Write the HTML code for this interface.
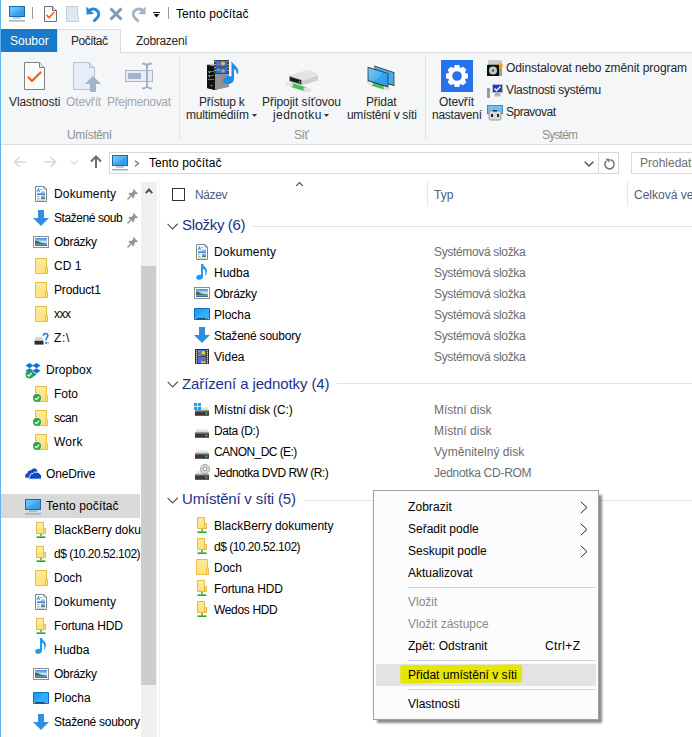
<!DOCTYPE html>
<html><head><meta charset="utf-8">
<style>
*{margin:0;padding:0;box-sizing:border-box}
html,body{width:692px;height:737px;overflow:hidden;background:#fff}
body{position:relative;font-family:"Liberation Sans",sans-serif;font-size:12px;color:#000}
.a{position:absolute;white-space:nowrap;line-height:14px}
.i{position:absolute;display:block;overflow:visible}
</style></head><body>
<svg width="0" height="0" style="position:absolute">
<defs>
<linearGradient id="gscr" x1="0" y1="0" x2="1" y2="1"><stop offset="0" stop-color="#7fcaf8"/><stop offset="0.5" stop-color="#4fb0f2"/><stop offset="0.5" stop-color="#3ea6ef"/><stop offset="1" stop-color="#2a98e8"/></linearGradient>
<linearGradient id="gfold" x1="0" y1="0" x2="0" y2="1"><stop offset="0" stop-color="#ffeaa0"/><stop offset="1" stop-color="#fde07a"/></linearGradient>
<symbol id="pc" viewBox="0 0 16 16"><rect x="0.5" y="0.5" width="15" height="10" fill="url(#gscr)" stroke="#1e6aa8"/><rect x="4" y="11.5" width="8" height="1" fill="#7f9cb8"/><rect x="0" y="14" width="16" height="1.6" fill="#9fb4c9"/></symbol>
<symbol id="fold" viewBox="0 0 13 16"><path d="M0.5 0.5H11.5V9.5H12.5V15.5H0.5Z" fill="url(#gfold)" stroke="#e6c23e"/><path d="M10.5 15.5V10Q10.5 9.5 11.5 9.5H12" stroke="#e6c23e" fill="none"/></symbol>
<symbol id="nfold" viewBox="0 0 10 16"><path d="M0.5 0.5H7.5V6.5H9.5V11.5H0.5Z" fill="url(#gfold)" stroke="#e3bb4a"/><path d="M7.5 6.5V11.5" stroke="#e3bb4a"/><rect x="4.3" y="12" width="1.4" height="2.4" fill="#2aa52a"/><rect x="0.5" y="14.4" width="9" height="1.6" fill="#2aa52a"/></symbol>
<symbol id="docs" viewBox="0 0 12 16"><path d="M0.5 0.5H9L11.5 3V15.5H0.5Z" fill="#fff" stroke="#858585"/><path d="M9 0.5V3H11.5" fill="none" stroke="#858585"/><path d="M1.8 6L3.6 2.3L4.4 6M2.6 4.6H4.2" stroke="#2b8ee0" stroke-width="0.9" fill="none"/><rect x="5.5" y="3" width="1.2" height="1.2" fill="#2b8ee0"/><rect x="6" y="5.6" width="4" height="1" fill="#46a0e8"/><rect x="2" y="7.4" width="8" height="1.4" fill="#0a78d8"/><rect x="2" y="9.8" width="2.5" height="0.9" fill="#999"/><rect x="6" y="9.6" width="4" height="1.2" fill="#5a9ef0"/><rect x="2" y="11.8" width="2.5" height="0.9" fill="#999"/><rect x="6" y="11.4" width="4" height="1.4" fill="#2a5a3a"/><rect x="2" y="13.6" width="8" height="0.9" fill="#aaa"/></symbol>
<symbol id="dl" viewBox="0 0 16 16"><path d="M5 0H11V8H16L8 16L0 8H5Z" fill="#2e8ee0"/></symbol>
<symbol id="pics" viewBox="0 0 16 12"><linearGradient id="gsky" x1="0" y1="0" x2="0" y2="1"><stop offset="0" stop-color="#3f86e0"/><stop offset="0.5" stop-color="#cfe6f5"/><stop offset="1" stop-color="#9cc0e0"/></linearGradient><rect x="0.5" y="0.5" width="15" height="11" fill="#fff" stroke="#8c8c8c"/><rect x="2" y="2" width="12" height="8" fill="url(#gsky)"/><path d="M2 4.5C4 4.5 6 6 8 6.8C10 7.3 12 7.2 14 7.5V8.5H2Z" fill="#3d6e48"/><path d="M2 8C6 7.6 10 8 14 8.4V10H2Z" fill="#6f98c0"/><rect x="2" y="9" width="12" height="1" fill="#3a6aa8"/></symbol>
<symbol id="music" viewBox="0 0 12 16"><path d="M5 0H7C7.3 1.5 8.5 2.5 9.5 3.5C10.8 4.8 11.2 6.5 10.8 8.5C10.5 9.8 10 10.8 9.4 11.5L8.8 11.2C9.3 10 9.5 8.5 9.2 7.2C8.9 6 8 5.2 7 4.8V12.5C7 14.5 5.5 15.8 3.5 15.8C1.5 15.8 0.2 15 0.2 13.5C0.2 11.8 2 10.8 3.8 10.8C4.3 10.8 4.7 10.9 5 11Z" fill="#1a9cf2"/></symbol>
<symbol id="desk" viewBox="0 0 16 12"><rect x="0" y="0" width="16" height="12" rx="0.8" fill="#0b6ac4"/><rect x="1" y="1" width="14" height="9" fill="#1ba1f7"/><path d="M1 10L11 1H15V10Z" fill="#31aef9"/><rect x="1" y="10" width="14" height="1.2" fill="#0a4e8e"/><rect x="1.2" y="10.1" width="1" height="1" fill="#fff"/><rect x="11.8" y="10.1" width="1" height="1" fill="#fff"/><rect x="13.8" y="10.1" width="1" height="1" fill="#fff"/></symbol>
<symbol id="vid" viewBox="0 0 14 15"><rect x="0" y="0" width="14" height="15" fill="#2a2a2a"/><rect x="3" y="0.8" width="8" height="6.4" fill="#3a78e0"/><rect x="3" y="7.9" width="8" height="6.4" fill="#3a78e0"/><circle cx="8.3" cy="4" r="1.9" fill="#e8d020"/><rect x="6" y="5.6" width="5" height="1.6" fill="#2a9a40"/><rect x="3" y="5.4" width="3" height="1.8" fill="#f07040"/><rect x="3.4" y="2.4" width="1.4" height="0.8" fill="#e0e080"/><circle cx="7.5" cy="9" r="1.3" fill="#c04080"/><rect x="6" y="12.2" width="4.5" height="2" fill="#e8c020"/><g fill="#f4f4f4"><rect x="1" y="1.2" width="1.2" height="1.2"/><rect x="11.8" y="1.2" width="1.2" height="1.2"/><rect x="1" y="3.2" width="1.2" height="1.2"/><rect x="11.8" y="3.2" width="1.2" height="1.2"/><rect x="1" y="5.2" width="1.2" height="1.2"/><rect x="11.8" y="5.2" width="1.2" height="1.2"/><rect x="1" y="7.2" width="1.2" height="1.2"/><rect x="11.8" y="7.2" width="1.2" height="1.2"/><rect x="1" y="9.2" width="1.2" height="1.2"/><rect x="11.8" y="9.2" width="1.2" height="1.2"/><rect x="1" y="11.2" width="1.2" height="1.2"/><rect x="11.8" y="11.2" width="1.2" height="1.2"/><rect x="1" y="13.2" width="1.2" height="1.2"/><rect x="11.8" y="13.2" width="1.2" height="1.2"/></g></symbol>
<symbol id="drv" viewBox="0 0 14 9"><path d="M1.8 0.3H12.2L14 3.8H0Z" fill="#d9dbdd"/><path d="M1.8 0.3H12.2L12.8 1.5H1.2Z" fill="#eceeef"/><rect x="0" y="3.6" width="14" height="5.2" fill="#3a3a3a"/><rect x="0" y="3.6" width="14" height="0.9" fill="#8f8f8f"/><rect x="10.5" y="5.6" width="1.8" height="1.6" fill="#3fdd3f"/></symbol>
<symbol id="pin" viewBox="0 0 11 11"><path d="M6.5 0L11 4.5L9.8 5.2L8.8 4.8L7 6.8L7.3 8.6L6.3 9.6L4.4 7.6L1 11L0 10L3.4 6.6L1.4 4.7L2.4 3.7L4.2 4L6.2 2.2L5.8 1.2Z" fill="#8d99a4"/></symbol>
<symbol id="chk" viewBox="0 0 8 8"><circle cx="4" cy="4" r="4" fill="#2aa84a"/><path d="M2 4.2L3.5 5.6L6.2 2.6" stroke="#fff" stroke-width="1.2" fill="none"/></symbol>
</defs></svg>
<div class="a" style="left:0;top:0;width:1px;height:737px;background:#5eb3ee"></div>
<div class="a" style="left:1px;top:29px;width:56px;height:24px;background:#1979ca"></div>
<div class="a" style="left:1px;top:52px;width:691px;height:93px;background:#f5f6f7;border-bottom:1px solid #dadbdc"></div>
<div class="a" style="left:121px;top:52px;width:571px;height:1px;background:#dadbdc"></div>
<div class="a" style="left:57px;top:29px;width:64px;height:24px;background:#f5f6f7;border:1px solid #dadbdc;border-bottom:none"></div>
<div class="a" style="left:179px;top:55px;width:1px;height:85px;background:#e2e3e4"></div>
<div class="a" style="left:425px;top:55px;width:1px;height:85px;background:#e2e3e4"></div>
<div class="a" style="left:109px;top:152px;width:510px;height:22px;border:1px solid #d9d9d9;background:#fff"></div>
<div class="a" style="left:598px;top:153px;width:1px;height:20px;background:#d9d9d9"></div>
<div class="a" style="left:631px;top:152px;width:70px;height:22px;border:1px solid #d9d9d9;background:#fff"></div>
<div class="a" style="left:141px;top:182px;width:16px;height:555px;background:#f0f0f0"></div>
<div class="a" style="left:141px;top:266px;width:15px;height:419px;background:#cdcdcd"></div>
<div class="a" style="left:159px;top:180px;width:1px;height:557px;background:#f2f2f2"></div>
<div class="a" style="left:1px;top:494px;width:139px;height:24px;background:#d9d9d9"></div>
<div class="a" style="left:172px;top:188px;width:13px;height:13px;border:1px solid #333"></div>
<div class="a" style="left:427px;top:181px;width:1px;height:25px;background:#e5e5e5"></div>
<div class="a" style="left:627px;top:181px;width:1px;height:25px;background:#e5e5e5"></div>
<div class="a" style="left:253px;top:226px;width:439px;height:1px;background:#e2e2e2"></div>
<div class="a" style="left:337px;top:383px;width:355px;height:1px;background:#e2e2e2"></div>
<div class="a" style="left:303px;top:500px;width:389px;height:1px;background:#e2e2e2"></div>
<div class="a" style="left:176px;top:7px;color:#000;letter-spacing:0.084px">Tento počítač</div>
<div class="a" style="left:10px;top:34px;color:#fff">Soubor</div>
<div class="a" style="left:71px;top:34px;color:#262626;letter-spacing:-0.505px">Počítač</div>
<div class="a" style="left:136px;top:34px;color:#262626;letter-spacing:-0.304px">Zobrazení</div>
<div class="a" style="left:9px;top:95px;color:#262626;letter-spacing:-0.081px">Vlastnosti</div>
<div class="a" style="left:66px;top:95px;color:#a0a6ae;letter-spacing:-0.136px">Otevřít</div>
<div class="a" style="left:107px;top:95px;color:#a0a6ae;letter-spacing:-0.338px">Přejmenovat</div>
<div class="a" style="left:67px;top:128px;color:#8f8f8f;letter-spacing:-0.402px">Umístění</div>
<div class="a" style="left:199px;top:95px;color:#262626;letter-spacing:-0.195px">Přístup k</div>
<div class="a" style="left:186px;top:108px;color:#262626;letter-spacing:-0.169px">multimédiím</div>
<div class="a" style="left:262px;top:95px;color:#262626;letter-spacing:-0.058px">Připojit síťovou</div>
<div class="a" style="left:273px;top:108px;color:#262626;letter-spacing:0.432px">jednotku</div>
<div class="a" style="left:294px;top:128px;color:#8f8f8f;letter-spacing:-0.422px">Síť</div>
<div class="a" style="left:366px;top:95px;color:#262626;letter-spacing:-0.172px">Přidat</div>
<div class="a" style="left:347px;top:108px;color:#262626;letter-spacing:-0.302px">umístění v síti</div>
<div class="a" style="left:439px;top:95px;color:#262626;letter-spacing:-0.136px">Otevřít</div>
<div class="a" style="left:432px;top:108px;color:#262626;letter-spacing:-0.256px">nastavení</div>
<div class="a" style="left:506px;top:61px;color:#262626;letter-spacing:-0.079px">Odinstalovat nebo změnit program</div>
<div class="a" style="left:506px;top:83px;color:#262626;letter-spacing:-0.279px">Vlastnosti systému</div>
<div class="a" style="left:506px;top:105px;color:#262626;letter-spacing:-0.504px">Spravovat</div>
<div class="a" style="left:542px;top:128px;color:#8f8f8f;letter-spacing:-0.803px">Systém</div>
<div class="a" style="left:149px;top:156px;color:#000;letter-spacing:0.084px">Tento počítač</div>
<div class="a" style="left:640px;top:156px;color:#6d6d6d">Prohledat</div>
<div class="a" style="left:54px;top:187px;color:#000;letter-spacing:0.162px">Dokumenty</div>
<div class="a" style="left:54px;top:211px;color:#000;width:70px;overflow:hidden;letter-spacing:-0.426px">Stažené soub</div>
<div class="a" style="left:54px;top:235px;color:#000;letter-spacing:-0.281px">Obrázky</div>
<div class="a" style="left:54px;top:259px;color:#000">CD 1</div>
<div class="a" style="left:54px;top:283px;color:#000;letter-spacing:-0.162px">Product1</div>
<div class="a" style="left:54px;top:307px;color:#000;letter-spacing:-0.500px">xxx</div>
<div class="a" style="left:54px;top:331px;color:#000;letter-spacing:0.650px">Z:\</div>
<div class="a" style="left:46px;top:363px;color:#000;letter-spacing:0.057px">Dropbox</div>
<div class="a" style="left:54px;top:387px;color:#000;letter-spacing:-0.005px">Foto</div>
<div class="a" style="left:54px;top:411px;color:#000;letter-spacing:-0.453px">scan</div>
<div class="a" style="left:54px;top:435px;color:#000;letter-spacing:0.240px">Work</div>
<div class="a" style="left:46px;top:467px;color:#000;letter-spacing:-0.170px">OneDrive</div>
<div class="a" style="left:46px;top:499px;color:#000;letter-spacing:0.101px">Tento počítač</div>
<div class="a" style="left:54px;top:523px;color:#000;width:87px;overflow:hidden;letter-spacing:-0.034px">BlackBerry dokumenty</div>
<div class="a" style="left:54px;top:547px;color:#000;width:87px;overflow:hidden;letter-spacing:-0.509px">d$ (10.20.52.102)</div>
<div class="a" style="left:54px;top:571px;color:#000;letter-spacing:-0.039px">Doch</div>
<div class="a" style="left:54px;top:595px;color:#000;letter-spacing:0.162px">Dokumenty</div>
<div class="a" style="left:54px;top:619px;color:#000;letter-spacing:-0.189px">Fortuna HDD</div>
<div class="a" style="left:54px;top:643px;color:#000">Hudba</div>
<div class="a" style="left:54px;top:667px;color:#000;letter-spacing:-0.281px">Obrázky</div>
<div class="a" style="left:54px;top:691px;color:#000">Plocha</div>
<div class="a" style="left:54px;top:715px;color:#000;width:87px;overflow:hidden;letter-spacing:-0.290px">Stažené soubory</div>
<div class="a" style="left:195px;top:188px;color:#4c607a;letter-spacing:-0.404px">Název</div>
<div class="a" style="left:434px;top:188px;color:#4c607a">Typ</div>
<div class="a" style="left:634px;top:188px;color:#4c607a">Celková velikost</div>
<div class="a" style="left:182px;top:216px;font-size:15px;line-height:17px;color:#1e3287;letter-spacing:-0.354px">Složky (6)</div>
<div class="a" style="left:182px;top:375px;font-size:15px;line-height:17px;color:#1e3287;letter-spacing:-0.117px">Zařízení a jednotky (4)</div>
<div class="a" style="left:182px;top:490px;font-size:15px;line-height:17px;color:#1e3287;letter-spacing:-0.202px">Umístění v síti (5)</div>
<div class="a" style="left:214px;top:245px;color:#000;letter-spacing:0.162px">Dokumenty</div>
<div class="a" style="left:434px;top:245px;color:#6d6d6d;letter-spacing:-0.334px">Systémová složka</div>
<div class="a" style="left:214px;top:266px;color:#000">Hudba</div>
<div class="a" style="left:434px;top:266px;color:#6d6d6d;letter-spacing:-0.334px">Systémová složka</div>
<div class="a" style="left:214px;top:287px;color:#000;letter-spacing:-0.281px">Obrázky</div>
<div class="a" style="left:434px;top:287px;color:#6d6d6d;letter-spacing:-0.334px">Systémová složka</div>
<div class="a" style="left:214px;top:308px;color:#000">Plocha</div>
<div class="a" style="left:434px;top:308px;color:#6d6d6d;letter-spacing:-0.334px">Systémová složka</div>
<div class="a" style="left:214px;top:329px;color:#000;letter-spacing:-0.219px">Stažené soubory</div>
<div class="a" style="left:434px;top:329px;color:#6d6d6d;letter-spacing:-0.334px">Systémová složka</div>
<div class="a" style="left:214px;top:350px;color:#000">Videa</div>
<div class="a" style="left:434px;top:350px;color:#6d6d6d;letter-spacing:-0.334px">Systémová složka</div>
<div class="a" style="left:214px;top:403px;color:#000;letter-spacing:-0.131px">Místní disk (C:)</div>
<div class="a" style="left:434px;top:403px;color:#6d6d6d;letter-spacing:0.004px">Místní disk</div>
<div class="a" style="left:214px;top:424px;color:#000;letter-spacing:-0.398px">Data (D:)</div>
<div class="a" style="left:434px;top:424px;color:#6d6d6d;letter-spacing:0.004px">Místní disk</div>
<div class="a" style="left:214px;top:445px;color:#000;letter-spacing:-0.560px">CANON_DC (E:)</div>
<div class="a" style="left:434px;top:445px;color:#6d6d6d;letter-spacing:0.047px">Vyměnitelný disk</div>
<div class="a" style="left:214px;top:466px;color:#000;letter-spacing:-0.480px">Jednotka DVD RW (R:)</div>
<div class="a" style="left:434px;top:466px;color:#6d6d6d;letter-spacing:-0.270px">Jednotka CD-ROM</div>
<div class="a" style="left:214px;top:519px;color:#000;letter-spacing:-0.034px">BlackBerry dokumenty</div>
<div class="a" style="left:214px;top:540px;color:#000;letter-spacing:-0.509px">d$ (10.20.52.102)</div>
<div class="a" style="left:214px;top:561px;color:#000;letter-spacing:-0.039px">Doch</div>
<div class="a" style="left:214px;top:582px;color:#000;letter-spacing:-0.189px">Fortuna HDD</div>
<div class="a" style="left:214px;top:603px;color:#000;letter-spacing:-0.346px">Wedos HDD</div>
<!-- ICONS -->
<svg class="i" style="left:35px;top:186px" width="12" height="16"><use href="#docs"/></svg>
<svg class="i" style="left:33px;top:210px" width="16" height="16"><use href="#dl"/></svg>
<svg class="i" style="left:33px;top:236px" width="16" height="12"><use href="#pics"/></svg>
<svg class="i" style="left:35px;top:258px" width="13" height="16"><use href="#fold"/></svg>
<svg class="i" style="left:35px;top:282px" width="13" height="16"><use href="#fold"/></svg>
<svg class="i" style="left:35px;top:306px" width="13" height="16"><use href="#fold"/></svg>
<svg class="i" style="left:35px;top:386px" width="13" height="16"><use href="#fold"/></svg>
<svg class="i" style="left:33px;top:394px" width="8" height="8"><use href="#chk"/></svg>
<svg class="i" style="left:35px;top:410px" width="13" height="16"><use href="#fold"/></svg>
<svg class="i" style="left:33px;top:418px" width="8" height="8"><use href="#chk"/></svg>
<svg class="i" style="left:35px;top:434px" width="13" height="16"><use href="#fold"/></svg>
<svg class="i" style="left:33px;top:442px" width="8" height="8"><use href="#chk"/></svg>
<svg class="i" style="left:25px;top:499px" width="16" height="16"><use href="#pc"/></svg>
<svg class="i" style="left:36px;top:522px" width="10" height="16"><use href="#nfold"/></svg>
<svg class="i" style="left:36px;top:546px" width="10" height="16"><use href="#nfold"/></svg>
<svg class="i" style="left:35px;top:570px" width="13" height="16"><use href="#fold"/></svg>
<svg class="i" style="left:35px;top:594px" width="12" height="16"><use href="#docs"/></svg>
<svg class="i" style="left:36px;top:618px" width="10" height="16"><use href="#nfold"/></svg>
<svg class="i" style="left:35px;top:638px" width="12" height="16"><use href="#music"/></svg>
<svg class="i" style="left:33px;top:668px" width="16" height="12"><use href="#pics"/></svg>
<svg class="i" style="left:33px;top:692px" width="16" height="12"><use href="#desk"/></svg>
<svg class="i" style="left:33px;top:714px" width="16" height="16"><use href="#dl"/></svg>
<svg class="i" style="left:127px;top:189px" width="11" height="11"><use href="#pin"/></svg>
<svg class="i" style="left:127px;top:213px" width="11" height="11"><use href="#pin"/></svg>
<svg class="i" style="left:127px;top:237px" width="11" height="11"><use href="#pin"/></svg>
<svg class="i" style="left:196px;top:244px" width="12" height="16"><use href="#docs"/></svg>
<svg class="i" style="left:196px;top:264px" width="12" height="16"><use href="#music"/></svg>
<svg class="i" style="left:194px;top:287px" width="16" height="12"><use href="#pics"/></svg>
<svg class="i" style="left:194px;top:308px" width="16" height="12"><use href="#desk"/></svg>
<svg class="i" style="left:194px;top:327px" width="16" height="16"><use href="#dl"/></svg>
<svg class="i" style="left:195px;top:349px" width="14" height="15"><use href="#vid"/></svg>
<svg class="i" style="left:195px;top:407px" width="14" height="9"><use href="#drv"/></svg>
<svg class="i" style="left:195px;top:429px" width="14" height="9"><use href="#drv"/></svg>
<svg class="i" style="left:195px;top:450px" width="14" height="9"><use href="#drv"/></svg>
<svg class="i" style="left:195px;top:471px" width="14" height="9"><use href="#drv"/></svg>
<svg class="i" style="left:197px;top:517px" width="10" height="16"><use href="#nfold"/></svg>
<svg class="i" style="left:197px;top:538px" width="10" height="16"><use href="#nfold"/></svg>
<svg class="i" style="left:197px;top:580px" width="10" height="16"><use href="#nfold"/></svg>
<svg class="i" style="left:197px;top:601px" width="10" height="16"><use href="#nfold"/></svg>
<svg class="i" style="left:196px;top:559px" width="13" height="16"><use href="#fold"/></svg>
<!-- EXTRA ICONS -->
<!-- title bar -->
<svg class="i" style="left:9px;top:6px" width="16" height="16"><use href="#pc"/></svg>
<div class="a" style="left:32px;top:7px;width:1px;height:12px;background:#9a9a9a"></div>
<svg class="i" style="left:44px;top:6px" width="13" height="16" viewBox="0 0 13 16"><path d="M0.5 0.5H8.5L12.5 4.5V15.5H0.5Z" fill="#fafafa" stroke="#707070"/><path d="M8.5 0.5V4.5H12.5" fill="#e0e0e0" stroke="#707070"/><path d="M2.5 9L5 11.5L10.5 6" stroke="#f05a22" stroke-width="1.6" fill="none"/></svg>
<svg class="i" style="left:66px;top:6px" width="13" height="16" viewBox="0 0 13 16"><path d="M0.5 0.5H11.5V9.5H12.5V15.5H0.5Z" fill="#dfe7f2" stroke="#c3d0e0"/></svg>
<svg class="i" style="left:86px;top:6px" width="15" height="16" viewBox="0 0 15 16"><path d="M2.5 5.2C5 2.5 9 2.5 11.2 4.6C13.4 6.8 13 10 11 12L7.5 15.5" stroke="#2b88d8" stroke-width="3" fill="none"/><path d="M0.3 0.5L0.5 8.5L8 8Z" fill="#2b88d8"/></svg>
<svg class="i" style="left:109px;top:7px" width="14" height="14" viewBox="0 0 14 14"><path d="M1.5 1.5L12.5 12.5M12.5 1.5L1.5 12.5" stroke="#8497b2" stroke-width="3"/></svg>
<svg class="i" style="left:131px;top:6px" width="15" height="16" viewBox="0 0 15 16"><path d="M12.5 5.2C10 2.5 6 2.5 3.8 4.6C1.6 6.8 2 10 4 12L7.5 15.5" stroke="#a3b5cd" stroke-width="3" fill="none"/><path d="M14.7 0.5L14.5 8.5L7 8Z" fill="#a3b5cd"/></svg>
<div class="a" style="left:153px;top:12px;width:7px;height:1px;background:#111"></div>
<svg class="i" style="left:153px;top:14px" width="7" height="4" viewBox="0 0 7 4"><path d="M0.5 0H6.5L3.5 3.5Z" fill="#111"/></svg>
<div class="a" style="left:168px;top:7px;width:1px;height:12px;background:#9a9a9a"></div>

<!-- ribbon: vlastnosti -->
<svg class="i" style="left:24px;top:62px" width="21" height="28" viewBox="0 0 21 28"><path d="M0.5 0.5H15.5L20.5 5.5V27.5H0.5Z" fill="#fbfbfb" stroke="#808080"/><path d="M15.5 0.5V5.5H20.5" fill="#e6e6e6" stroke="#808080"/><path d="M3.8 14.8L8 19L17.2 9.8" stroke="#f7630c" stroke-width="2.2" fill="none"/></svg>
<!-- otevrit -->
<svg class="i" style="left:73px;top:62px" width="29" height="30" viewBox="0 0 29 30"><path d="M0.5 0.5H16.5L21.5 5.5V27.5H0.5Z" fill="#e6edf8" stroke="#b4c2d8"/><path d="M16.5 0.5V5.5H21.5" fill="#d5def0" stroke="#b4c2d8"/><path d="M20 14L28 22H23V30H17V22H12Z" fill="#a3b2c8"/></svg>
<!-- prejmenovat -->
<svg class="i" style="left:124px;top:62px" width="30" height="28" viewBox="0 0 30 28"><rect x="1.5" y="8.5" width="27" height="11" fill="#e6edf8" stroke="#a8b6cc"/><rect x="4" y="11" width="13" height="6" fill="#a3b2c8"/><path d="M18 1.5C20 1.5 22 2 23 3.5C24 2 26 1.5 28 1.5M23 3.5V24.5M18 26.5C20 26.5 22 26 23 24.5C24 26 26 26.5 28 26.5" stroke="#a3b2c8" stroke-width="2" fill="none"/></svg>

<!-- media icon -->
<svg class="i" style="left:206px;top:59px" width="34" height="32" viewBox="0 0 34 32">
<path d="M1 6L5 5H15V29L9 31L1 29Z" fill="#0a0a0a"/><path d="M9 7H23V28L9 31Z" fill="#8f9296"/><path d="M1 6L9 7.5V31L1 29Z" fill="#111"/>
<path d="M1 6L6 4.5H15L9 7Z" fill="#c8cacc"/>
<rect x="2" y="12" width="6" height="1" fill="#1e7ef0"/><rect x="2" y="16" width="6" height="1" fill="#1e7ef0"/><rect x="2" y="20" width="6" height="1" fill="#1e7ef0"/>
<circle cx="3.5" cy="13.5" r="0.8" fill="#40d0ff"/><circle cx="3.5" cy="17.5" r="0.8" fill="#40d0ff"/><circle cx="5.5" cy="26.5" r="0.8" fill="#40d0ff"/>
<rect x="8" y="1" width="15" height="14" fill="#444"/><rect x="10" y="2" width="11" height="5.5" fill="#2f6fe0"/><rect x="10" y="8.5" width="11" height="5.5" fill="#2f6fe0"/>
<circle cx="17" cy="4.5" r="2" fill="#f0c030"/><circle cx="17" cy="12" r="1.8" fill="#e0a020"/><rect x="11" y="4" width="3" height="2" fill="#e05060"/><rect x="11" y="10" width="3" height="2" fill="#50c060"/>
<g fill="#eee"><rect x="8.5" y="2" width="1" height="1"/><rect x="8.5" y="5" width="1" height="1"/><rect x="8.5" y="8" width="1" height="1"/><rect x="8.5" y="11" width="1" height="1"/><rect x="21.5" y="2" width="1" height="1"/><rect x="21.5" y="5" width="1" height="1"/><rect x="21.5" y="8" width="1" height="1"/><rect x="21.5" y="11" width="1" height="1"/></g>
<path d="M25.5 2C26.5 4 28 5.5 30 7.5C32.5 10 33 13 31.5 15L30.5 14.5C31 12.5 30 11 28 10V20C28 23 25 25 22 25C19.5 25 17 24 17 21.5C17 19 20 17 23 17C24 17 25 17.2 25.5 17.5Z" fill="#1b8fe6"/>
</svg>

<!-- network drive icon -->
<svg class="i" style="left:285px;top:70px" width="34" height="22" viewBox="0 0 34 22">
<path d="M6.5 15L21 19.5" stroke="#44c058" stroke-width="4.4" fill="none"/>
<path d="M1.8 13.5L6.5 15" stroke="#e6e6e6" stroke-width="3.4" stroke-linecap="round" fill="none"/>
<path d="M20 19.2L24.5 20.5" stroke="#e2e2e2" stroke-width="3.4" stroke-linecap="round" fill="none"/>
<path d="M4 5.5L20 0.5H26L33 4L17 9.5Z" fill="#e2e3e4"/>
<path d="M4 5.5L17 9.5V15.5L4 11.5Z" fill="#b9babb"/>
<path d="M4.8 6.8L16.2 10.3V14.3L4.8 10.8Z" fill="#1c1c1c"/>
<path d="M17 9.5L33 4V10.5L17 15.5Z" fill="#cfd0d1"/>
<path d="M17 9.5L33 4V5L17 10.5Z" fill="#f4f4f4"/>
<rect x="13.6" y="11.3" width="1.6" height="1.6" fill="#3ee03e"/>
</svg>

<!-- network location icon -->
<svg class="i" style="left:366px;top:65px" width="30" height="27" viewBox="0 0 30 27">
<path d="M5.5 18.6L19 22.8" stroke="#46c056" stroke-width="4.2" fill="none"/>
<path d="M2 17.6L5.5 18.6" stroke="#e4e4e4" stroke-width="3.4" stroke-linecap="round" fill="none"/>
<path d="M19 22.8L22.5 23.8" stroke="#dedede" stroke-width="3.4" stroke-linecap="round" fill="none"/>
<path d="M8 0.6L28.4 7.2V21.2L12 16Z" fill="#2d2d2d"/><path d="M8.8 1.6L27.6 7.8V20.1L12 15.2Z" fill="#3cb0f6"/>
<path d="M1.6 1.8L22.4 8.2V22.4L1.6 16Z" fill="#2f2f2f"/><path d="M2.4 2.9L21.6 8.8V21.3L2.4 15.3Z" fill="url(#gscr)"/>
</svg>

<!-- settings icon -->
<svg class="i" style="left:441px;top:60px" width="32" height="32" viewBox="0 0 32 32">
<rect width="32" height="32" fill="#2672ec"/>
<path d="M12.80 8.02 L13.80 5.02 L18.20 5.02 L19.20 8.02 A8.6 8.6 0 0 1 19.38 8.09 L22.21 6.68 L25.32 9.79 L23.91 12.62 A8.6 8.6 0 0 1 23.98 12.80 L26.98 13.80 L26.98 18.20 L23.98 19.20 A8.6 8.6 0 0 1 23.91 19.38 L25.32 22.21 L22.21 25.32 L19.38 23.91 A8.6 8.6 0 0 1 19.20 23.98 L18.20 26.98 L13.80 26.98 L12.80 23.98 A8.6 8.6 0 0 1 12.62 23.91 L9.79 25.32 L6.68 22.21 L8.09 19.38 A8.6 8.6 0 0 1 8.02 19.20 L5.02 18.20 L5.02 13.80 L8.02 12.80 A8.6 8.6 0 0 1 8.09 12.62 L6.68 9.79 L9.79 6.68 L12.62 8.09 A8.6 8.6 0 0 1 12.80 8.02Z" fill="#fff"/>
<circle cx="16" cy="16" r="4.8" fill="#2672ec"/>
</svg>

<!-- small system icons -->
<svg class="i" style="left:487px;top:60px" width="16" height="16" viewBox="0 0 16 16">
<rect x="1" y="0" width="14" height="5" fill="#c9cbcd"/><rect x="1" y="4" width="14" height="12" fill="#7fa98a"/><circle cx="13" cy="6" r="2.8" fill="#f0a030"/>
<rect x="0" y="5" width="12" height="11" fill="#0e0e0e"/><circle cx="6" cy="10.5" r="4" fill="#c8c8c8"/><circle cx="6" cy="10.5" r="1.2" fill="#555"/>
</svg>
<svg class="i" style="left:487px;top:84px" width="16" height="14" viewBox="0 0 16 14">
<rect x="5" y="0" width="11" height="9" fill="#b8bcc0"/><rect x="6" y="1" width="9" height="7" fill="#1a3ed0"/><path d="M7.5 4.5L9.5 6.5L13.5 2.5" stroke="#fff" stroke-width="1.4" fill="none"/><rect x="8" y="9" width="5" height="2" fill="#aaa"/><rect x="7" y="11" width="7" height="1.5" fill="#bbb"/>
<rect x="0" y="4" width="3" height="10" fill="#9a9ea2"/><rect x="0.8" y="5" width="1.4" height="1.4" fill="#30c030"/>
</svg>
<svg class="i" style="left:487px;top:105px" width="16" height="15" viewBox="0 0 16 15">
<rect x="0" y="0" width="16" height="9" fill="#2d8fe0"/><rect x="1" y="1" width="14" height="7" fill="#6cc0f5"/>
<rect x="2" y="6" width="12" height="9" rx="1.5" fill="#d8d8d8" stroke="#8a8a8a" stroke-width="0.8"/><rect x="4" y="9" width="2" height="3" fill="#222"/><rect x="10" y="9" width="2" height="3" fill="#222"/><rect x="6" y="5" width="4" height="1.5" fill="#333"/>
</svg>

<!-- ribbon dropdown arrows -->
<svg class="i" style="left:252px;top:114px" width="5" height="3" viewBox="0 0 5 3"><path d="M0 0H5L2.5 3Z" fill="#333"/></svg>
<svg class="i" style="left:324px;top:114px" width="5" height="3" viewBox="0 0 5 3"><path d="M0 0H5L2.5 3Z" fill="#333"/></svg>

<!-- address bar icons -->
<svg class="i" style="left:13px;top:156px" width="14" height="12" viewBox="0 0 14 12"><path d="M13 6H1.5M6.5 1L1.5 6L6.5 11" stroke="#d9d9d9" stroke-width="1.6" fill="none"/></svg>
<svg class="i" style="left:43px;top:156px" width="14" height="12" viewBox="0 0 14 12"><path d="M1 6H12.5M7.5 1L12.5 6L7.5 11" stroke="#d9d9d9" stroke-width="1.6" fill="none"/></svg>
<svg class="i" style="left:70px;top:160px" width="8" height="5" viewBox="0 0 8 5"><path d="M0.5 0.8L4 4L7.5 0.8" stroke="#d9d9d9" stroke-width="1.2" fill="none"/></svg>
<svg class="i" style="left:90px;top:155px" width="12" height="13" viewBox="0 0 12 13"><path d="M6 13V1.5M1 6.5L6 1.5L11 6.5" stroke="#6d6d6d" stroke-width="2" fill="none"/></svg>
<svg class="i" style="left:112px;top:155px" width="16" height="16"><use href="#pc"/></svg>
<svg class="i" style="left:134px;top:160px" width="6" height="7" viewBox="0 0 6 7"><path d="M1 0.8L4.5 3.5L1 6.2" stroke="#7a7a7a" stroke-width="1.3" fill="none"/></svg>
<svg class="i" style="left:584px;top:161px" width="10" height="6" viewBox="0 0 10 6"><path d="M0.7 0.8L5 5L9.3 0.8" stroke="#555" stroke-width="1.5" fill="none"/></svg>
<svg class="i" style="left:603px;top:158px" width="12" height="12" viewBox="0 0 12 12"><path d="M3.5 2.8A4.6 4.6 0 1 0 7.5 1.8" stroke="#6d6d6d" stroke-width="1.5" fill="none"/><path d="M2 0.5H6V4.5Z" fill="#6d6d6d" transform="translate(0.5 0.3)"/></svg>

<!-- scroll caret -->
<svg class="i" style="left:145px;top:188px" width="8" height="6" viewBox="0 0 8 6"><path d="M0.8 5.2L4 1.6L7.2 5.2" stroke="#505050" stroke-width="2" fill="none"/></svg>
<!-- sort caret -->
<svg class="i" style="left:295px;top:181px" width="9" height="6" viewBox="0 0 9 6"><path d="M1.3 4.8L4.5 1.5L7.7 4.8" stroke="#4a4a4a" stroke-width="1.1" fill="none"/></svg>
<!-- group chevrons -->
<svg class="i" style="left:167px;top:223px" width="12" height="7" viewBox="0 0 12 7"><path d="M0.6 0.9L5.6 5.9L10.8 0.7" stroke="#5a5a5a" stroke-width="1.25" fill="none"/></svg>
<svg class="i" style="left:167px;top:381px" width="12" height="7" viewBox="0 0 12 7"><path d="M0.6 0.9L5.6 5.9L10.8 0.7" stroke="#5a5a5a" stroke-width="1.25" fill="none"/></svg>
<svg class="i" style="left:167px;top:497px" width="12" height="7" viewBox="0 0 12 7"><path d="M0.6 0.9L5.6 5.9L10.8 0.7" stroke="#5a5a5a" stroke-width="1.25" fill="none"/></svg>

<!-- Z: drive -->
<svg class="i" style="left:34px;top:333px" width="15" height="12" viewBox="0 0 15 12"><path d="M1.5 4H8.5L9.5 8H0.5Z" fill="#d4d6d8"/><rect x="0.5" y="7.8" width="9" height="3.8" fill="#2e2e2e"/><path d="M9.3 2.8C9.3 1.2 10.4 0.5 11.5 0.5C12.8 0.5 13.9 1.3 13.9 2.6C13.9 4.2 12.1 4.6 12.1 6.5V7.5" stroke="#1f78d0" stroke-width="1.5" fill="none"/><rect x="11.2" y="9" width="1.8" height="1.8" fill="#1f78d0"/><rect x="13.5" y="8.5" width="1.2" height="3" fill="#b0b0b0"/></svg>
<!-- Dropbox -->
<svg class="i" style="left:25px;top:363px" width="16" height="16" viewBox="0 0 16 16"><g fill="#0d6fdc"><path d="M4.5 0L0.5 2.6L4.5 5.2L8.5 2.6Z"/><path d="M11.5 0L7.5 2.6L11.5 5.2L15.5 2.6Z"/><path d="M0.5 7.8L4.5 10.4L8.5 7.8L4.5 5.2Z"/><path d="M15.5 7.8L11.5 10.4L7.5 7.8L11.5 5.2Z"/><path d="M4.5 11.4L8 13.8L11.5 11.4L8 9Z"/></g><circle cx="4.5" cy="11.5" r="4" fill="#2aa84a"/><path d="M2.4 11.6L3.9 13.1L6.6 10.2" stroke="#fff" stroke-width="1.2" fill="none"/></svg>
<!-- OneDrive -->
<svg class="i" style="left:25px;top:468px" width="17" height="12" viewBox="0 0 17 12"><path d="M0.2 8.2C0.2 6.3 1.2 5.2 2.5 5.2C2.8 3.2 4.3 2.2 6 2.4C7 0.8 8.5 0.3 10 0.5C11.3 0.7 12 1.6 12.3 2.7L11.5 9.8H1Q0.2 9.8 0.2 8.2Z" fill="#0a4cc0"/><path d="M4.4 11.2C3.6 11.2 3.6 8.9 4.7 8.5C4.8 6.6 6.2 5.2 8 5.6C8.8 4.1 10.6 3.6 12 4.4C13.3 3.8 14.8 4.6 15.1 6.2C16.3 6.4 17 7.6 16.6 9V11.2Z" fill="#0a4cc0" stroke="#fff" stroke-width="1"/></svg>
<!-- windows logo -->
<svg class="i" style="left:194px;top:403px" width="7" height="7" viewBox="0 0 7 7"><g fill="#1aa3f0"><rect x="0" y="0" width="3" height="3"/><rect x="3.8" y="0" width="3.2" height="3"/><rect x="0" y="3.8" width="3" height="3.2"/><rect x="3.8" y="3.8" width="3.2" height="3.2"/></g></svg>
<!-- DVD disc -->
<svg class="i" style="left:200px;top:464px" width="10" height="10" viewBox="0 0 10 10"><circle cx="5" cy="5" r="4.6" fill="#d8d8d8" stroke="#9a9a9a" stroke-width="0.8"/><circle cx="5" cy="5" r="1.8" fill="#fff" stroke="#888" stroke-width="0.8"/></svg>


<div class="a" style="left:377px;top:495px;width:225px;height:228px;background:rgba(0,0,0,0.45);filter:blur(1.2px)"></div>
<div class="a" style="left:373px;top:490px;width:226px;height:230px;background:#fcfcfc;border:1px solid #a0a0a0"></div>
<div class="a" style="left:408px;top:587px;width:188px;height:1px;background:#d7d7d7"></div>
<div class="a" style="left:408px;top:660px;width:188px;height:1px;background:#d7d7d7"></div>
<div class="a" style="left:376px;top:664px;width:220px;height:22px;background:#e3e3e3"></div>
<svg class="i" style="left:398px;top:662px" width="128" height="24" viewBox="0 0 128 24"><path d="M2.2 4.5Q2.5 3 5 3L40 3.2L75 2.8L95 3L110 2.6L123.5 2.8Q124.2 3 124.2 4.5L124 19Q124 20.5 122 20.5L90 20.6L60 21L30 21.3L5 21.4Q2.5 21.4 2.2 19.5Z" fill="#e6e600"/></svg>
<div class="a" style="left:408px;top:689px;width:188px;height:1px;background:#d7d7d7"></div>
<div class="a" style="left:408px;top:500px;color:#000;letter-spacing:0.063px">Zobrazit</div>
<div class="a" style="left:408px;top:522px;color:#000">Seřadit podle</div>
<div class="a" style="left:408px;top:544px;color:#000">Seskupit podle</div>
<div class="a" style="left:408px;top:566px;color:#000">Aktualizovat</div>
<div class="a" style="left:408px;top:595px;color:#8a8a8a">Vložit</div>
<div class="a" style="left:408px;top:617px;color:#8a8a8a">Vložit zástupce</div>
<div class="a" style="left:408px;top:639px;color:#000">Zpět: Odstranit</div>
<div class="a" style="left:545px;top:639px;color:#000;letter-spacing:0.400px">Ctrl+Z</div>
<div class="a" style="left:408px;top:668px;color:#000;letter-spacing:0.014px">Přidat umístění v síti</div>
<div class="a" style="left:408px;top:697px;color:#000">Vlastnosti</div>
<svg class="i" style="left:580px;top:501px" width="8" height="13" viewBox="0 0 8 13"><path d="M0.8 0.8L7 6.5L0.8 12.2" stroke="#222" stroke-width="1" fill="none"/></svg>
<svg class="i" style="left:580px;top:523px" width="8" height="13" viewBox="0 0 8 13"><path d="M0.8 0.8L7 6.5L0.8 12.2" stroke="#222" stroke-width="1" fill="none"/></svg>
<svg class="i" style="left:580px;top:545px" width="8" height="13" viewBox="0 0 8 13"><path d="M0.8 0.8L7 6.5L0.8 12.2" stroke="#222" stroke-width="1" fill="none"/></svg>
</body></html>
